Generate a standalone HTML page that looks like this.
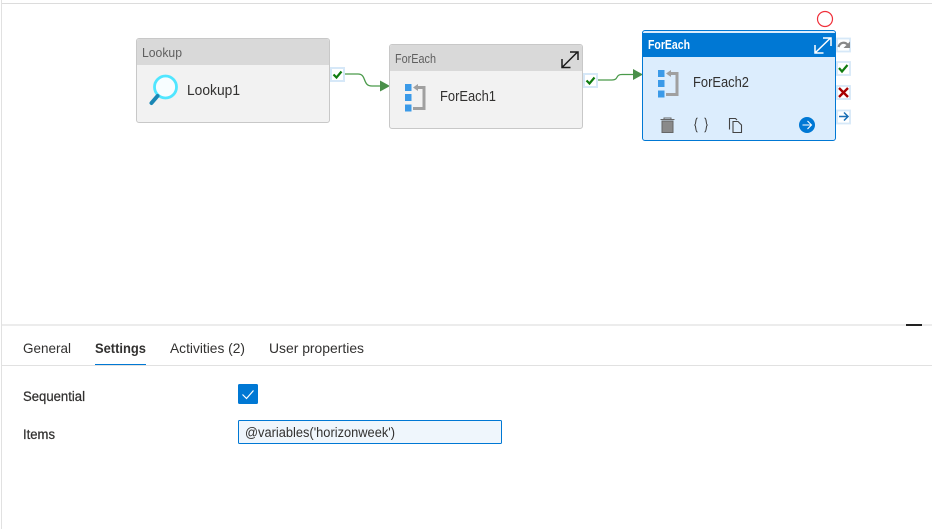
<!DOCTYPE html>
<html>
<head>
<meta charset="utf-8">
<style>
html,body{margin:0;padding:0;background:#fff;width:932px;height:529px;overflow:hidden}
svg{display:block;position:absolute;left:0;top:0}
text{font-family:"Liberation Sans",sans-serif;font-size:14px;fill:#323130}
</style>
</head>
<body>
<svg width="932" height="529" viewBox="0 0 932 529" xmlns="http://www.w3.org/2000/svg">
<!-- frame -->
<rect x="1" y="0" width="1" height="529" fill="#e1e1e1"/>
<rect x="2" y="3" width="930" height="1" fill="#dcdcdc"/>
<rect x="2" y="324" width="930" height="2" fill="#ececec"/>
<rect x="906" y="324" width="16" height="2" fill="#222"/>

<!-- connectors -->
<path d="M342 74H358C367 74 362 86 372 86H382" fill="none" stroke="#4a9a4a" stroke-width="1.300"/>
<path d="M380 80.500L390 86L380 91.500Z" fill="#4a8f4a"/>
<path d="M595 80H612C619 80 615 74.500 622 74.500H635" fill="none" stroke="#4a9a4a" stroke-width="1.300"/>
<path d="M633 69L643 74.500L633 80Z" fill="#4a8f4a"/>

<!-- node 1 -->
<rect x="136.500" y="38.500" width="193" height="84" rx="2.500" fill="#f2f2f2" stroke="#c8c8c8"/>
<path d="M137 65V41.500A2.500 2.500 0 0 1 139.500 39H326.500A2.500 2.500 0 0 1 329 41.500V65Z" fill="#d9d9d9"/>
<text x="142" y="57" style="fill:#5f5f5f;font-size:13px" textLength="40" lengthAdjust="spacingAndGlyphs">Lookup</text>
<circle cx="165.500" cy="87" r="11" fill="#f7fdff" stroke="#50e6ff" stroke-width="2.800"/>
<path d="M157.500 96L151.500 103" stroke="#1a87b5" stroke-width="4" stroke-linecap="round"/>
<text x="187" y="95" style="font-size:14.500px" textLength="53" lengthAdjust="spacingAndGlyphs">Lookup1</text>

<!-- check 1 -->
<rect x="331" y="68" width="13" height="13" fill="#fff" stroke="#d6e8f8" stroke-width="2"/>
<path d="M333.500 74.500L336.500 77.500L341.500 71.500" fill="none" stroke="#107c10" stroke-width="2.200"/>

<!-- node 2 -->
<rect x="389.500" y="44.500" width="193" height="84" rx="2.500" fill="#f2f2f2" stroke="#c8c8c8"/>
<path d="M390 71V47.500A2.500 2.500 0 0 1 392.500 45H579.500A2.500 2.500 0 0 1 582 47.500V71Z" fill="#d9d9d9"/>
<text x="395" y="63" style="fill:#5f5f5f;font-size:13px" textLength="41" lengthAdjust="spacingAndGlyphs">ForEach</text>
<path d="M562.500 67L577.500 52M570 52H578V60M562 59V67.500H570.500" fill="none" stroke="#1a1a1a" stroke-width="1.500"/>
<rect x="405" y="84" width="6.500" height="7" fill="#3b9ae8"/>
<rect x="405" y="94" width="6.500" height="7" fill="#3b9ae8"/>
<rect x="405" y="104.500" width="6.500" height="7" fill="#3b9ae8"/>
<path d="M415 87.500H424V108.500H413" fill="none" stroke="#a0a0a0" stroke-width="3"/>
<path d="M413 87.500L418 84V91Z" fill="#a0a0a0"/>
<text x="440" y="101" style="font-size:14.500px" textLength="56" lengthAdjust="spacingAndGlyphs">ForEach1</text>

<!-- check 2 -->
<rect x="584" y="74" width="13" height="13" fill="#fff" stroke="#d6e8f8" stroke-width="2"/>
<path d="M586.500 80.500L589.500 83.500L594.500 77.500" fill="none" stroke="#107c10" stroke-width="2.200"/>

<!-- node 3 -->
<circle cx="825" cy="19" r="7.500" fill="#fff" stroke="#f0303a" stroke-width="1.200"/>
<rect x="642.500" y="30.500" width="193" height="110" rx="2.500" fill="#dcedfd" stroke="#0078d4"/>
<rect x="643" y="33" width="192" height="24" fill="#0078d4"/>
<text x="648" y="49" font-weight="bold" style="fill:#fff;font-size:12.500px" textLength="42" lengthAdjust="spacingAndGlyphs">ForEach</text>
<path d="M815.500 52.500L830.500 38M823 38H831V46M815 45V53H823.500" fill="none" stroke="#fff" stroke-width="1.500"/>
<rect x="658" y="70" width="6.500" height="7" fill="#3b9ae8"/>
<rect x="658" y="80" width="6.500" height="7" fill="#3b9ae8"/>
<rect x="658" y="90.500" width="6.500" height="7" fill="#3b9ae8"/>
<path d="M668 73.500H677V94.500H666" fill="none" stroke="#a0a0a0" stroke-width="3"/>
<path d="M666 73.500L671 70V77Z" fill="#a0a0a0"/>
<text x="693" y="87" style="font-size:14.500px" textLength="56" lengthAdjust="spacingAndGlyphs">ForEach2</text>

<!-- toolbar -->
<path d="M660.500 119.500H674.500M664 119.500V118H671V119.500" fill="none" stroke="#666" stroke-width="1"/>
<path d="M662 121H673V132.500H662Z" fill="#8a8a8a" stroke="#666" stroke-width="1"/>
<path d="M697.500 118C695 118 696.500 124.500 694.500 125C696.500 125.500 695 132 697.500 132M704.500 118C707 118 705.500 124.500 707.500 125C705.500 125.500 707 132 704.500 132" fill="none" stroke="#333" stroke-width="1"/>
<path d="M729.500 129.500V118.500H735.500L737 120M733 132.500V121.500H738L741.500 125V132.500Z" fill="none" stroke="#444" stroke-width="1.100"/>
<circle cx="807" cy="125" r="8" fill="#0078d4"/>
<path d="M802.500 125H811M807.500 121L811.500 125L807.500 129" fill="none" stroke="#fff" stroke-width="1.100"/>

<!-- side icons -->
<rect x="837" y="38.500" width="13" height="13" fill="#fff" stroke="#d6e8f8" stroke-width="1.800"/>
<path d="M838.500 47C840 42 845 41.500 848 45" fill="none" stroke="#888" stroke-width="2.200"/>
<path d="M850 41.500V48H843.500Z" fill="#888"/>
<rect x="837" y="62" width="13" height="13" fill="#fff" stroke="#d6e8f8" stroke-width="1.800"/>
<path d="M839 68L842 71.500L847.500 65" fill="none" stroke="#107c10" stroke-width="2.200"/>
<rect x="837" y="86" width="13" height="13" fill="#fff" stroke="#d6e8f8" stroke-width="1.800"/>
<path d="M839 88L848 97M848 88L839 97" fill="none" stroke="#a80000" stroke-width="2.400"/>
<rect x="837" y="110.500" width="13" height="13" fill="#fff" stroke="#d6e8f8" stroke-width="1.800"/>
<path d="M839 116.500H848M844 112.500L848 116.500L844 120.500" fill="none" stroke="#1a6fb5" stroke-width="1.500"/>

<!-- tabs -->
<text x="23" y="353" textLength="48" lengthAdjust="spacingAndGlyphs">General</text>
<text x="95" y="353" font-weight="bold" textLength="51" lengthAdjust="spacingAndGlyphs">Settings</text>
<text x="170" y="353" textLength="75" lengthAdjust="spacingAndGlyphs">Activities (2)</text>
<text x="269" y="353" textLength="95" lengthAdjust="spacingAndGlyphs">User properties</text>
<rect x="95" y="364" width="51" height="2" fill="#0078d4"/>
<rect x="2" y="365" width="930" height="1" fill="#e1e1e1"/>

<!-- form -->
<text x="23" y="401" style="font-size:13.500px;stroke:#323130;stroke-width:.25" textLength="62" lengthAdjust="spacingAndGlyphs">Sequential</text>
<rect x="238" y="384" width="20" height="20" rx="1.500" fill="#0078d4"/>
<path d="M242.500 394.500L246.500 398.500L253.500 390.500" fill="none" stroke="#fff" stroke-width="1.200"/>
<text x="23" y="439" style="font-size:13.500px;stroke:#323130;stroke-width:.25" textLength="32" lengthAdjust="spacingAndGlyphs">Items</text>
<rect x="238.500" y="420.500" width="263" height="23" rx="1" fill="#eff6fc" stroke="#0078d4"/>
<text x="245" y="437" style="font-size:13.500px" textLength="150" lengthAdjust="spacingAndGlyphs">@variables('horizonweek')</text>
</svg>
</body>
</html>
